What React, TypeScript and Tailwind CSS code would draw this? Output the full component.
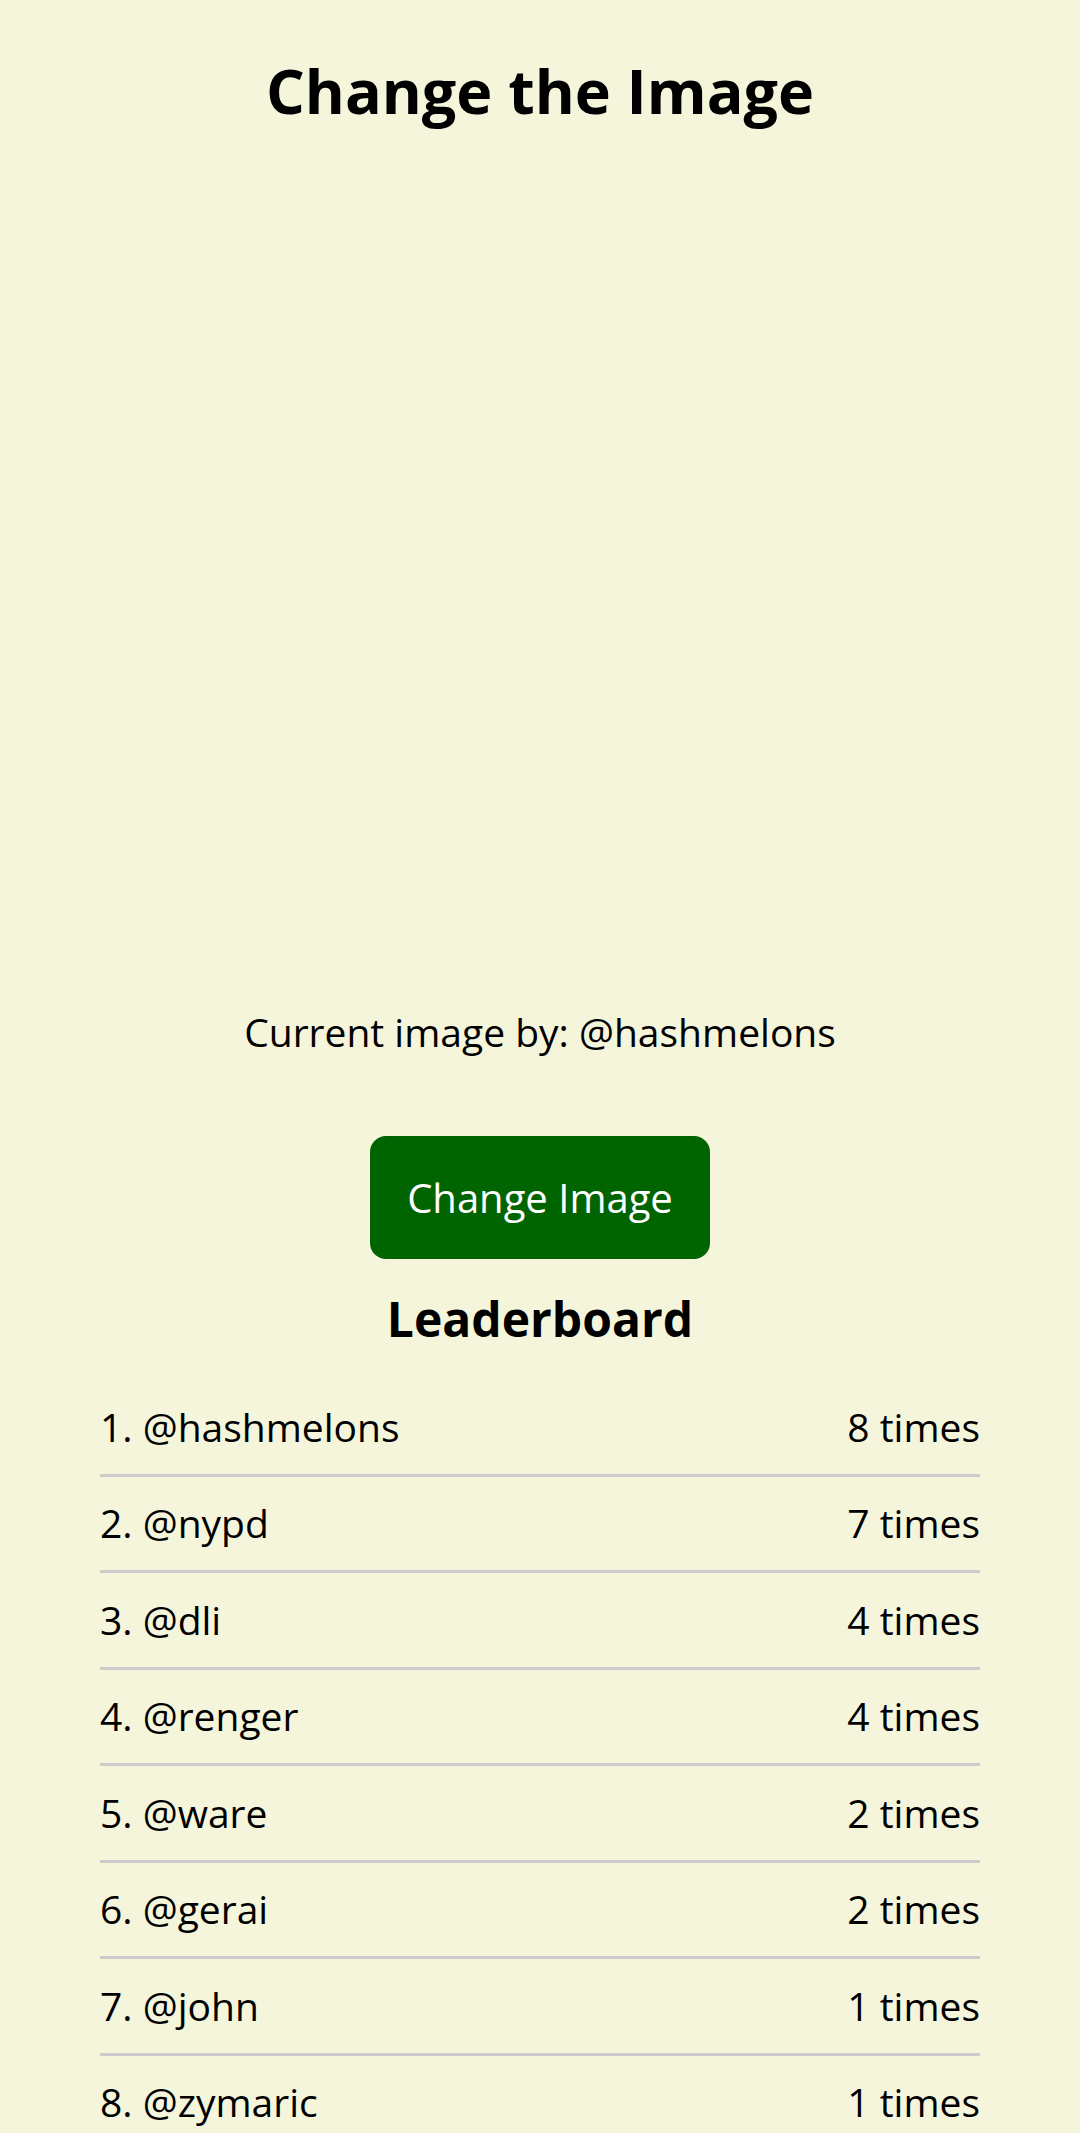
import React from 'react';

const leaders = [
  { name: '@hashmelons', count: 8 },
  { name: '@nypd', count: 7 },
  { name: '@dli', count: 4 },
  { name: '@renger', count: 4 },
  { name: '@ware', count: 2 },
  { name: '@gerai', count: 2 },
  { name: '@john', count: 1 },
  { name: '@zymaric', count: 1 },
];

export default function App() {
  return (
    <main className="min-h-screen bg-[#f5f5dc] text-black font-['Open_Sans',sans-serif] flex flex-col items-center">
      <h1 className="mt-[48px] text-[61px] leading-[86px] font-bold">Change the Image</h1>

      {/* image slot, empty */}
      <div className="h-[871px] w-full" />

      <p className="text-[39px] leading-[54px]">Current image by: @hashmelons</p>

      <button
        type="button"
        className="mt-[77px] h-[123px] w-[340px] rounded-[16px] bg-[#006400] text-[40px] text-white"
      >
        Change Image
      </button>

      <h2 className="mt-[28px] text-[48px] leading-[64px] font-bold">Leaderboard</h2>

      <ul className="mt-[29px] w-[880px]">
        {leaders.map((l, i) => (
          <li
            key={l.name}
            className="flex h-[96.5px] items-center justify-between border-b-[3px] border-[#cccccc] text-[39px]"
          >
            <span>
              {i + 1}. {l.name}
            </span>
            <span>{l.count} times</span>
          </li>
        ))}
      </ul>
    </main>
  );
}
